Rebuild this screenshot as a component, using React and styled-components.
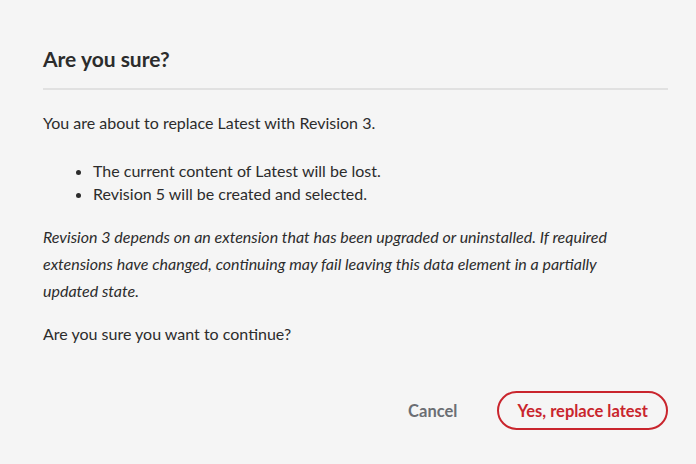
import styled, { createGlobalStyle } from "styled-components";

const Global = createGlobalStyle`
    html, body {
        margin: 0;
        padding: 0;
        background: #f5f5f5;
    }
    body {
        font-family: Lato, "Noto Sans", sans-serif;
        color: #2c2c2c;
    }
`;

export default function App() {
    return (
        <>
            <Global />
            <Dialog>
                <Title>Are you sure?</Title>
                <Divider />
                <Body>
                    <Text>You are about to replace Latest with Revision 3.</Text>
                    <List>
                        <li>The current content of Latest will be lost.</li>
                        <li>Revision 5 will be created and selected.</li>
                    </List>
                    <Note>
                        Revision 3 depends on an extension that has been upgraded or uninstalled. If required
                        extensions have changed, continuing may fail leaving this data element in a partially
                        updated state.
                    </Note>
                    <Text>Are you sure you want to continue?</Text>
                </Body>
                <Footer>
                    <CancelButton>Cancel</CancelButton>
                    <ConfirmButton>Yes, replace latest</ConfirmButton>
                </Footer>
            </Dialog>
        </>
    );
}

const Dialog = styled.div`
    width: 696px;
    height: 464px;
    box-sizing: border-box;
    padding: 45px 28px 0 43px;
    display: flex;
    flex-direction: column;
`;

const Title = styled.h2`
    margin: 0;
    font-size: 21px;
    font-weight: 700;
    line-height: 28px;
    color: #2c2c2c;
`;

const Divider = styled.div`
    height: 2px;
    background: #e1e1e1;
    margin-top: 15px;
`;

const Body = styled.div`
    display: flex;
    flex-direction: column;
    margin-top: 21px;
    font-size: 16px;
    color: #2c2c2c;
`;

const Text = styled.p`
    margin: 0 0 19px;
    line-height: 24px;
`;

const Note = styled.p`
    margin: 0 0 18px;
    max-width: 588px;
    line-height: 27px;
    font-style: italic;
`;

const List = styled.ul`
    margin: 5px 0 18px;
    padding-left: 50px;
    line-height: 23px;
`;

const Footer = styled.div`
    display: flex;
    justify-content: flex-end;
    align-items: center;
    gap: 40px;
    margin-top: 26px;
`;

const CancelButton = styled.button`
    border: none;
    background: none;
    padding: 0;
    font-family: inherit;
    font-size: 16.5px;
    font-weight: 700;
    color: #6b6e73;
    cursor: pointer;
`;

const ConfirmButton = styled.button`
    height: 39px;
    padding: 0 18px;
    border: 2px solid #c9252d;
    border-radius: 20px;
    background: transparent;
    font-family: inherit;
    font-size: 16.5px;
    font-weight: 700;
    color: #c9252d;
    cursor: pointer;
`;
